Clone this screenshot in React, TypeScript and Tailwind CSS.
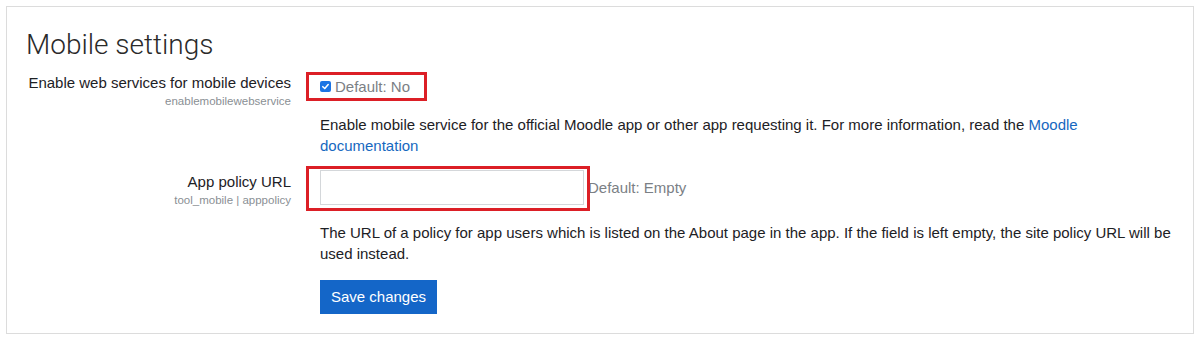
import React from "react";

export default function App() {
  return (
    <div className="w-[1200px] h-[341px] bg-white pt-[6px] px-[6px]" style={{ fontFamily: '"Liberation Sans", Arial, sans-serif' }}>
      <div className="border border-[#dcdcdc] h-[328px] text-[#1d2125]">
        <h2 className="pl-[19px] pt-[19px] text-[28px] leading-[38px] font-light text-[#2a2a2a]" style={{ fontFamily: 'Roboto, "Liberation Sans", sans-serif' }}>Mobile settings</h2>

        <div className="mt-[8px] flex">
          <div className="w-[284px] shrink-0 text-right pt-[1px]">
            <div className="text-[15px] leading-[20px]">Enable web services for mobile devices</div>
            <div className="text-[11.5px] leading-[16px] text-[#8a8f94]">enablemobilewebservice</div>
          </div>
          <div className="ml-[29px] w-[860px]">
            <div className="relative h-[29px] flex items-center gap-[4px]">
              <span className="w-[11px] h-[11px] rounded-[2px] bg-[#1b74e4] flex items-center justify-center">
                <svg width="9" height="9" viewBox="0 0 10 10" fill="none">
                  <path d="M2 5.2 L4.2 7.3 L8 2.8" stroke="white" strokeWidth="1.7" strokeLinecap="round" strokeLinejoin="round" />
                </svg>
              </span>
              <span className="text-[15px] leading-[20px] text-[#7b8085]">Default: No</span>
              <div className="absolute left-[-14px] top-0 w-[121px] h-[29px] border-[3px] border-[#dc1f26]" />
            </div>
            <p className="mt-[13px] text-[15px] leading-[21px]">
              Enable mobile service for the official Moodle app or other app requesting it. For more information, read the{" "}
              <span className="text-[#1668c0]">Moodle documentation</span>
            </p>
          </div>
        </div>

        <div className="mt-[10px] flex">
          <div className="w-[284px] shrink-0 text-right pt-[6px]">
            <div className="text-[15px] leading-[20px]">App policy URL</div>
            <div className="text-[11.5px] leading-[16px] text-[#8a8f94]">tool_mobile | apppolicy</div>
          </div>
          <div className="ml-[29px] w-[870px]">
            <div className="relative pt-[4px] flex items-center gap-[4px]">
              <div className="w-[264px] h-[35px] border border-[#d4d7da] bg-white" />
              <span className="text-[15px] leading-[20px] text-[#7b8085]">Default: Empty</span>
              <div className="absolute left-[-14px] top-0 w-[284px] h-[45px] border-[3px] border-[#dc1f26]" />
            </div>
            <p className="mt-[17px] text-[15px] leading-[21px]">
              The URL of a policy for app users which is listed on the About page in the app. If the field is left empty, the site policy URL will be used instead.
            </p>
            <button className="mt-[16px] h-[34px] w-[117px] bg-[#1466c8] text-white text-[15px]">Save changes</button>
          </div>
        </div>
      </div>
    </div>
  );
}
